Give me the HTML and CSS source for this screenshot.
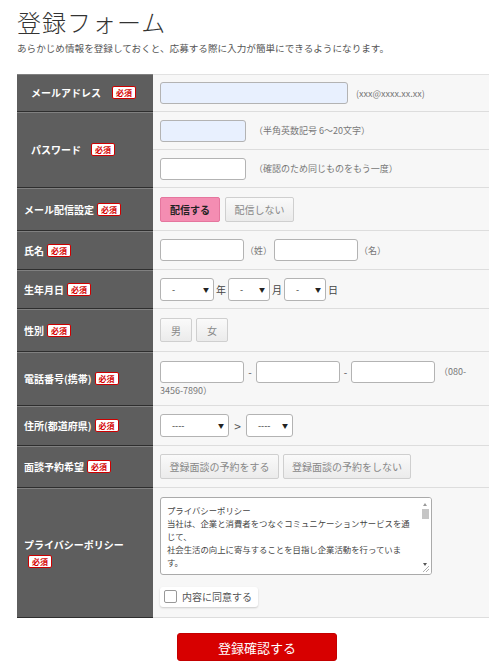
FILE: index.html
```html
<!DOCTYPE html>
<html lang="ja">
<head>
<meta charset="utf-8">
<title>登録フォーム</title>
<link rel="stylesheet" href="styles.css">
</head>
<body>
<div class="page">
  <h1 class="title">登録フォーム</h1>
  <p class="lead">あらかじめ情報を登録しておくと、応募する際に入力が簡単にできるようになります。</p>

  <table class="form-table">
    <colgroup><col class="col-label"><col class="col-field"></colgroup>
    <tr class="row row-first h38">
      <th class="label label-indent"><span>メールアドレス</span><span class="req req-far">必須</span></th>
      <td class="cell">
        <div class="line"><input type="text" class="field field-email field-filled"><span class="hint hint-gap">(xxx@xxxx.xx.xx)</span></div>
      </td>
    </tr>
    <tr class="row h38">
      <th class="label label-indent" rowspan="2"><span>パスワード</span><span class="req req-far2">必須</span></th>
      <td class="cell">
        <div class="line"><input type="password" class="field field-pass field-filled"><span class="hint hint-gap">（半角英数記号 6〜20文字）</span></div>
      </td>
    </tr>
    <tr class="row h38">
      <td class="cell">
        <div class="line"><input type="password" class="field field-pass"><span class="hint hint-gap">（確認のため同じものをもう一度）</span></div>
      </td>
    </tr>
    <tr class="row h43">
      <th class="label"><span>メール配信設定</span><span class="req">必須</span></th>
      <td class="cell">
        <div class="line gap5"><span class="btn btn-on">配信する</span><span class="btn btn-off btn-wide">配信しない</span></div>
      </td>
    </tr>
    <tr class="row h39">
      <th class="label"><span>氏名</span><span class="req">必須</span></th>
      <td class="cell">
        <div class="line"><input type="text" class="field field-name"><span class="hint hint-name">（姓）</span><input type="text" class="field field-name"><span class="hint hint-name">（名）</span></div>
      </td>
    </tr>
    <tr class="row h39">
      <th class="label"><span>生年月日</span><span class="req">必須</span></th>
      <td class="cell">
        <div class="line">
          <span class="select sel-year"><span>-</span><span class="caret">▼</span></span><span class="unit">年</span>
          <span class="select sel-md"><span>-</span><span class="caret">▼</span></span><span class="unit">月</span>
          <span class="select sel-md"><span>-</span><span class="caret">▼</span></span><span class="unit">日</span>
        </div>
      </td>
    </tr>
    <tr class="row h43">
      <th class="label"><span>性別</span><span class="req">必須</span></th>
      <td class="cell">
        <div class="line gap4"><span class="btn btn-off btn-sex">男</span><span class="btn btn-off btn-sex">女</span></div>
      </td>
    </tr>
    <tr class="row h54">
      <th class="label"><span>電話番号(携帯)</span><span class="req">必須</span></th>
      <td class="cell">
        <div class="line"><input type="tel" class="field field-name"><span class="dash">-</span><input type="tel" class="field field-name"><span class="dash dash-b">-</span><input type="tel" class="field field-name"><span class="hint hint-tel">（080-</span></div>
        <div class="hint hint-wrap">3456-7890）</div>
      </td>
    </tr>
    <tr class="row h40">
      <th class="label"><span>住所(都道府県)</span><span class="req">必須</span></th>
      <td class="cell">
        <div class="line">
          <span class="select sel-pref"><span>----</span><span class="caret">▼</span></span><span class="gt">&gt;</span>
          <span class="select sel-city"><span>----</span><span class="caret">▼</span></span>
        </div>
      </td>
    </tr>
    <tr class="row h42">
      <th class="label"><span>面談予約希望</span><span class="req">必須</span></th>
      <td class="cell">
        <div class="line gap4"><span class="btn btn-off btn-meet">登録面談の予約をする</span><span class="btn btn-off btn-meet2">登録面談の予約をしない</span></div>
      </td>
    </tr>
    <tr class="row h130">
      <th class="label"><div>プライバシーポリシー</div><span class="req req-block">必須</span></th>
      <td class="cell">
        <div class="textarea">
          <div class="ta-text">
            <div>プライバシーポリシー</div>
            <div>当社は、企業と消費者をつなぐコミュニケーションサービスを通</div>
            <div>じて、</div>
            <div>社会生活の向上に寄与することを目指し企業活動を行っていま</div>
            <div>す。</div>
          </div>
          <div class="scrollbar">
            <span class="sb-up"></span>
            <span class="sb-thumb"></span>
            <span class="sb-down"></span>
            <svg class="grip" width="8" height="8" viewBox="0 0 8 8"><path d="M7 1 L1 7 M7 4 L4 7" stroke="#9a9a9a" stroke-width="0.8" fill="none"/></svg>
          </div>
        </div>
        <label class="agree"><span class="checkbox"></span><span>内容に同意する</span></label>
      </td>
    </tr>
  </table>

  <div class="submit-wrap"><button type="button" class="submit">登録確認する</button></div>
</div>
</body>
</html>
```

FILE: styles.css
```css
* { box-sizing: border-box; }

body {
  margin: 0;
  background: #ffffff;
  font-family: "Noto Sans CJK JP", "Noto Sans", sans-serif;
  color: #333;
}

.page {
  padding: 0 11px 0 17px;
}

.title {
  margin: 7px 0 0;
  font-size: 24px;
  line-height: 29px;
  font-weight: 300;
  letter-spacing: 1px;
  color: #333;
}

.lead {
  margin: 5px 0 0;
  font-size: 9.6px;
  line-height: 14px;
  color: #555;
}

.form-table {
  margin-top: 19px;
  width: 472px;
  border-collapse: separate;
  border-spacing: 0;
  table-layout: fixed;
}

.col-label { width: 136px; }
.col-field { width: 336px; }

.h38 { height: 38px; }
.h39 { height: 39px; }
.h40 { height: 40px; }
.h42 { height: 42px; }
.h43 { height: 43px; }
.h54 { height: 54px; }
.h130 { height: 130px; }

.label {
  background: #5e5e5e;
  color: #fff;
  text-align: left;
  font-size: 10px;
  font-weight: bold;
  line-height: 14px;
  padding: 0 4px 0 7px;
  border-top: 1px solid #808080;
  border-bottom: 1px solid #2e2e2e;
  vertical-align: middle;
  white-space: nowrap;
}

.label-indent { padding-left: 14px; }

.cell {
  background: #f7f7f7;
  border-bottom: 1px solid #dddddd;
  padding: 0 7px;
  vertical-align: middle;
}

.row-first .cell { border-top: 1px solid #e2e2e2; }

.req {
  display: inline-block;
  margin-left: 3px;
  padding: 0 3px;
  height: 13px;
  line-height: 11px;
  font-size: 8px;
  font-weight: bold;
  color: #d40000;
  background: #fff;
  border: 1px solid #cc0000;
  border-radius: 2px;
  vertical-align: 1px;
}

.req-far { margin-left: 11px; }
.req-far2 { margin-left: 10px; }
.req-block { display: block; width: 24px; margin: 3px 0 0 4px; }

.line {
  display: flex;
  align-items: center;
}

.gap5 { gap: 5px; }
.gap4 { gap: 4px; }

.field {
  height: 22px;
  border: 1px solid #b3b3b3;
  border-radius: 3px;
  background: #fff;
  padding: 0 4px;
  font: inherit;
  margin: 0;
}

.field-filled { background: #e8f0fe; }
.field-email { width: 188px; }
.field-pass { width: 86px; }
.field-name { width: 84px; }

.hint {
  font-size: 9px;
  color: #777;
  white-space: nowrap;
  line-height: 13px;
}

.hint-gap { margin-left: 8px; }
.hint-name { margin: 0 2px 0 1px; }
.hint-tel { margin-left: 4px; }
.hint-wrap { margin-top: 1px; }

.dash {
  width: 12px;
  text-align: center;
  font-size: 10px;
  color: #555;
}
.dash-b { width: 11px; }

.btn {
  display: inline-flex;
  align-items: center;
  justify-content: center;
  height: 25px;
  border-radius: 2px;
  font-size: 10px;
  white-space: nowrap;
}

.btn-on {
  width: 60px;
  background: #f48db2;
  border: 1px solid #e5769e;
  color: #222;
  font-weight: bold;
}

.btn-off {
  background: linear-gradient(#fafafa, #ebebeb);
  border: 1px solid #cfcfcf;
  color: #888;
}

.btn-wide { width: 69px; }
.btn-sex { width: 32px; height: 24px; }
.btn-meet { width: 119px; }
.btn-meet2 { width: 128px; }

.select {
  display: inline-flex;
  align-items: center;
  justify-content: space-between;
  height: 23px;
  padding: 0 4px 0 11px;
  background: #fff;
  border: 1px solid #b3b3b3;
  border-radius: 3px;
  font-size: 9px;
  color: #333;
}

.caret { font-size: 6px; color: #222; }

.sel-year { width: 54px; }
.sel-md { width: 42px; }
.sel-pref { width: 69px; }
.sel-city { width: 47px; }

.unit {
  font-size: 10px;
  color: #444;
  width: 14px;
  padding-left: 2px;
}

.gt {
  width: 17px;
  text-align: center;
  font-size: 12px;
  color: #555;
}

.textarea {
  position: relative;
  width: 272px;
  height: 78px;
  background: #fff;
  border: 1px solid #aaaaaa;
  border-radius: 3px;
  overflow: hidden;
}

.ta-text {
  padding: 6px 0 0 6px;
  font-size: 8.4px;
  line-height: 13px;
  color: #444;
  white-space: nowrap;
}

.scrollbar {
  position: absolute;
  top: 0;
  right: 0;
  width: 11px;
  height: 100%;
  background: #fff;
}

.sb-up, .sb-down {
  position: absolute;
  left: 3px;
  width: 0;
  height: 0;
  border-left: 2.5px solid transparent;
  border-right: 2.5px solid transparent;
}
.sb-up { top: 5px; border-bottom: 3px solid #999; }
.sb-down { top: 65px; border-top: 3px solid #555; }

.sb-thumb {
  position: absolute;
  top: 11px;
  left: 2px;
  width: 7px;
  height: 10px;
  background: #c6c6c6;
}

.grip {
  position: absolute;
  right: 1px;
  bottom: 1px;
}

.agree {
  display: inline-flex;
  align-items: center;
  gap: 5px;
  margin-top: 12px;
  height: 20px;
  padding: 0 6px 0 4px;
  background: #fff;
  border-radius: 3px;
  box-shadow: 0 1px 2px rgba(0, 0, 0, 0.18);
  font-size: 10px;
  color: #555;
}

.checkbox {
  width: 13px;
  height: 13px;
  border: 1px solid #999;
  border-radius: 2px;
  background: #fff;
}

.submit-wrap {
  margin-top: 15px;
  padding-left: 160px;
}

.submit {
  width: 160px;
  height: 28px;
  background: #d70000;
  border: 1px solid #c40000;
  border-radius: 3px;
  color: #fff;
  font-family: inherit;
  font-size: 13px;
  padding: 0;
}
```
